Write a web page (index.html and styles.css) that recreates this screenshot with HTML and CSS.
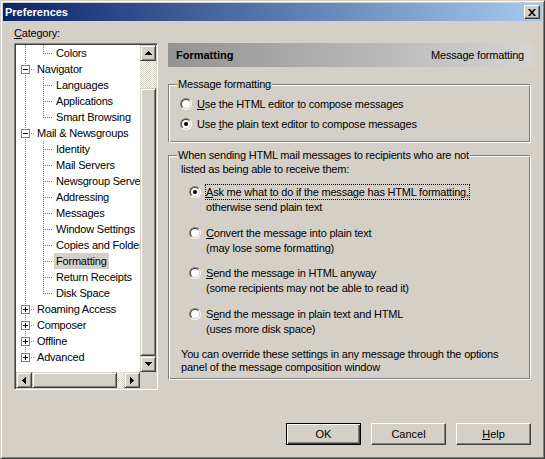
FILE: index.html
```
<!DOCTYPE html>
<html>
<head>
<meta charset="utf-8">
<link rel="stylesheet" href="styles.css">
</head>
<body>
<div class="window">
  <div class="titlebar">
    <span class="title">Preferences</span>
    <span class="close"><svg width="8" height="7" viewBox="0 0 8 7"><path d="M0 0h2l2 2.3L6 0h2L5 3.5 8 7H6L4 4.7 2 7H0l3-3.5z" fill="#000"/></svg></span>
  </div>
  <div class="main">
    <div class="cat-label"><u>C</u>ategory:</div>
    <div class="tree">
      <div class="rows">
        <div class="row"><span class="i v"></span><span class="i eh"></span><span class="lbl">Colors</span></div>
        <div class="row"><span class="i pv"><svg class="box" width="9" height="9"><rect x=".5" y=".5" width="8" height="8" fill="#fff" stroke="#808080"/><path d="M2 4.5h5" stroke="#000"/></svg></span><span class="lbl top">Navigator</span></div>
        <div class="row"><span class="i v"></span><span class="i vh"></span><span class="lbl">Languages</span></div>
        <div class="row"><span class="i v"></span><span class="i vh"></span><span class="lbl">Applications</span></div>
        <div class="row"><span class="i v"></span><span class="i eh"></span><span class="lbl">Smart Browsing</span></div>
        <div class="row"><span class="i pv"><svg class="box" width="9" height="9"><rect x=".5" y=".5" width="8" height="8" fill="#fff" stroke="#808080"/><path d="M2 4.5h5" stroke="#000"/></svg></span><span class="lbl top">Mail &amp; Newsgroups</span></div>
        <div class="row"><span class="i v"></span><span class="i vh"></span><span class="lbl">Identity</span></div>
        <div class="row"><span class="i v"></span><span class="i vh"></span><span class="lbl">Mail Servers</span></div>
        <div class="row"><span class="i v"></span><span class="i vh"></span><span class="lbl">Newsgroup Servers</span></div>
        <div class="row"><span class="i v"></span><span class="i vh"></span><span class="lbl">Addressing</span></div>
        <div class="row"><span class="i v"></span><span class="i vh"></span><span class="lbl">Messages</span></div>
        <div class="row"><span class="i v"></span><span class="i vh"></span><span class="lbl">Window Settings</span></div>
        <div class="row"><span class="i v"></span><span class="i vh"></span><span class="lbl">Copies and Folders</span></div>
        <div class="row"><span class="i v"></span><span class="i vh"></span><span class="lbl sel">Formatting</span></div>
        <div class="row"><span class="i v"></span><span class="i vh"></span><span class="lbl">Return Receipts</span></div>
        <div class="row"><span class="i v"></span><span class="i eh"></span><span class="lbl">Disk Space</span></div>
        <div class="row"><span class="i pv"><svg class="box" width="9" height="9"><rect x=".5" y=".5" width="8" height="8" fill="#fff" stroke="#808080"/><path d="M2 4.5h5M4.5 2v5" stroke="#000"/></svg></span><span class="lbl top">Roaming Access</span></div>
        <div class="row"><span class="i pv"><svg class="box" width="9" height="9"><rect x=".5" y=".5" width="8" height="8" fill="#fff" stroke="#808080"/><path d="M2 4.5h5M4.5 2v5" stroke="#000"/></svg></span><span class="lbl top">Composer</span></div>
        <div class="row"><span class="i pv"><svg class="box" width="9" height="9"><rect x=".5" y=".5" width="8" height="8" fill="#fff" stroke="#808080"/><path d="M2 4.5h5M4.5 2v5" stroke="#000"/></svg></span><span class="lbl top">Offline</span></div>
        <div class="row"><span class="i pe"><svg class="box" width="9" height="9"><rect x=".5" y=".5" width="8" height="8" fill="#fff" stroke="#808080"/><path d="M2 4.5h5M4.5 2v5" stroke="#000"/></svg></span><span class="lbl top">Advanced</span></div>
      </div>
      <div class="vscroll">
        <div class="b3d sbtn"><svg width="7" height="4" viewBox="0 0 7 4" shape-rendering="crispEdges"><path d="M3 0h1v1h1v1h1v1h1v1H0V3h1V2h1V1h1z" fill="#000"/></svg></div>
        <div class="track vtrack"></div>
        <div class="b3d vthumb"></div>
        <div class="b3d sbtn"><svg width="7" height="4" viewBox="0 0 7 4" shape-rendering="crispEdges"><path d="M0 0h7v1H6v1H5v1H4v1H3V3H2V2H1V1H0z" fill="#000"/></svg></div>
      </div>
      <div class="hscroll">
        <div class="b3d sbtn"><svg width="4" height="7" viewBox="0 0 4 7" shape-rendering="crispEdges"><path d="M3 0h1v7H3V6H2V5H1V4H0V3h1V2h1V1h1z" fill="#000"/></svg></div>
        <div class="b3d hthumb"></div>
        <div class="track htrack"></div>
        <div class="b3d sbtn"><svg width="4" height="7" viewBox="0 0 4 7" shape-rendering="crispEdges"><path d="M0 0h1v1h1v1h1v1h1v1H3v1H2v1H1v1H0z" fill="#000"/></svg></div>
      </div>
      <div class="corner"></div>
    </div>
    <div class="panel">
      <div class="phead"><b>Formatting</b><span>Message formatting</span></div>
      <fieldset class="group g1">
        <legend>Message formatting</legend>
        <div class="opt-row"><span class="radio"><span class="radio-in"></span></span><span><u>U</u>se the HTML editor to compose messages</span></div>
        <div class="opt-row"><span class="radio"><span class="radio-in on"></span></span><span>Use <u>t</u>he plain text editor to compose messages</span></div>
      </fieldset>
      <fieldset class="group g2">
        <legend>When sending HTML mail messages to recipients who are not</legend>
        <div class="intro">listed as being able to receive them:</div>
        <div class="options">
          <div class="option"><span class="radio"><span class="radio-in on"></span></span><div class="otext"><span class="l1 focus"><u>A</u>sk me what to do if the message has HTML formatting,</span><div class="l2">otherwise send plain text</div></div></div>
          <div class="option"><span class="radio"><span class="radio-in"></span></span><div class="otext"><span class="l1"><u>C</u>onvert the message into plain text</span><div class="l2">(may lose some formatting)</div></div></div>
          <div class="option"><span class="radio"><span class="radio-in"></span></span><div class="otext"><span class="l1"><u>S</u>end the message in HTML anyway</span><div class="l2">(some recipients may not be able to read it)</div></div></div>
          <div class="option"><span class="radio"><span class="radio-in"></span></span><div class="otext"><span class="l1">S<u>e</u>nd the message in plain text and HTML</span><div class="l2">(uses more disk space)</div></div></div>
        </div>
        <div class="note">You can override these settings in any message through the options<br>panel of the message composition window</div>
      </fieldset>
    </div>
  </div>
  <div class="footer">
    <button class="btn default">OK</button>
    <button class="btn">Cancel</button>
    <button class="btn"><u>H</u>elp</button>
  </div>
</div>
</body>
</html>
```
FILE: styles.css
```
html, body {
  margin: 0;
  padding: 0;
  background: #d4d0c8;
}

.window {
  --dv: repeating-linear-gradient(to bottom, #808080 0 1px, transparent 1px 2px);
  --dh: repeating-linear-gradient(to right, #808080 0 1px, transparent 1px 2px);
  width: 545px;
  height: 459px;
  box-sizing: border-box;
  background: #d4d0c8;
  border: 1px solid;
  border-color: #d4d0c8 #404040 #404040 #d4d0c8;
  box-shadow: inset 1px 1px #fff, inset -1px -1px #808080;
  padding: 2px;
  display: flex;
  flex-direction: column;
  font: 11px "Liberation Sans", Arial, sans-serif;
  letter-spacing: -0.2px;
  color: #000;
}

.titlebar {
  height: 18px;
  flex: none;
  display: flex;
  align-items: flex-start;
  justify-content: space-between;
  background: linear-gradient(to right, #0a246a, #a6caf0);
}

.title {
  color: #fff;
  font-weight: bold;
  line-height: 18px;
  padding-left: 2px;
  letter-spacing: 0;
}

.close {
  width: 16px;
  height: 14px;
  margin: 2px 2px 0 0;
  box-sizing: border-box;
  background: #d4d0c8;
  border: 1px solid;
  border-color: #fff #404040 #404040 #fff;
  box-shadow: inset -1px -1px #808080;
  display: flex;
  align-items: center;
  justify-content: center;
  padding-right: 1px;
}

.main {
  display: grid;
  grid-template-columns: 144px 364px;
  grid-template-rows: 17px 347px;
  column-gap: 10px;
  padding: 5px 0 0 11px;
}

.cat-label {
  grid-column: 1;
  grid-row: 1;
  line-height: 15px;
}

.tree {
  grid-column: 1;
  grid-row: 2;
  box-sizing: border-box;
  border: 1px solid;
  border-color: #808080 #fff #fff #808080;
  box-shadow: inset 1px 1px #404040, inset -1px -1px #d4d0c8;
  padding: 1px;
  background: #fff;
  display: grid;
  grid-template-columns: 124px 16px;
  grid-template-rows: 327px 16px;
}

.rows {
  overflow: hidden;
  background: #fff;
}

.row {
  display: flex;
  height: 16px;
  line-height: 16px;
  white-space: nowrap;
}

.i {
  width: 18px;
  height: 16px;
  flex: none;
  display: flex;
  align-items: flex-start;
  background-repeat: no-repeat;
}

.i.v {
  background-image: var(--dv);
  background-position: 9px 0;
  background-size: 1px 16px;
}

.i.vh {
  background-image: var(--dv), var(--dh);
  background-position: 9px 0, 11px 8px;
  background-size: 1px 16px, 7px 1px;
}

.i.eh {
  background-image: var(--dv), var(--dh);
  background-position: 9px 0, 11px 8px;
  background-size: 1px 9px, 7px 1px;
}

.i.pv {
  background-image: var(--dv), var(--dh);
  background-position: 9px 0, 15px 8px;
  background-size: 1px 16px, 3px 1px;
}

.i.pe {
  background-image: var(--dv), var(--dh);
  background-position: 9px 0, 15px 8px;
  background-size: 1px 8px, 3px 1px;
}

.box {
  display: block;
  margin: 4px 0 0 5px;
}

.lbl {
  padding: 0 2px;
  margin-left: 2px;
}

.lbl.top {
  margin-left: 1px;
}

.lbl.sel {
  background: #d4d0c8;
}

.b3d {
  box-sizing: border-box;
  background: #d4d0c8;
  border: 1px solid;
  border-color: #d4d0c8 #404040 #404040 #d4d0c8;
  box-shadow: inset 1px 1px #fff, inset -1px -1px #808080;
  display: flex;
  align-items: center;
  justify-content: center;
}

.sbtn {
  width: 16px;
  height: 16px;
  flex: none;
}

.track {
  background: repeating-conic-gradient(#d4d0c8 0 25%, #fff 0 50%) 0 0 / 2px 2px;
  flex: none;
}

.vscroll {
  display: flex;
  flex-direction: column;
}

.vtrack { height: 27px; }
.vthumb { height: 268px; flex: none; }

.hscroll {
  display: flex;
}

.htrack { width: 7px; }
.hthumb { width: 85px; flex: none; }

.corner {
  background: #d4d0c8;
}

.panel {
  grid-column: 2;
  grid-row: 2;
  display: flex;
  flex-direction: column;
}

.phead {
  height: 24px;
  flex: none;
  display: flex;
  align-items: center;
  justify-content: space-between;
  padding: 0 8px;
  background: linear-gradient(to right, #939393, #d4d4d4);
}

.phead b {
  letter-spacing: 0;
}

.group {
  margin: 0 1px 0 0;
  min-width: 0;
  border: 1px solid;
  border-color: #808080 #fff #fff #808080;
  box-shadow: inset 1px 1px #fff, inset -1px -1px #808080;
}

.group legend {
  padding: 0 1px;
  line-height: 13px;
  background: #d4d0c8;
}

.g1 {
  margin-top: 11px;
  padding: 3px 0 8px 8px;
}

.g2 {
  margin-top: 6px;
  padding: 1px 0 5px 8px;
}

.opt-row {
  display: flex;
  align-items: center;
  gap: 5px;
  height: 20px;
  padding-left: 3px;
}

.radio {
  width: 12px;
  height: 12px;
  flex: none;
  box-sizing: border-box;
  border-radius: 50%;
  border: 1px solid;
  border-color: #808080 #fff #fff #808080;
  display: flex;
}

.radio-in {
  flex: 1;
  box-sizing: border-box;
  border-radius: 50%;
  border: 1px solid;
  border-color: #404040 #d4d0c8 #d4d0c8 #404040;
  background: #fff;
  display: flex;
  align-items: center;
  justify-content: center;
}

.radio-in.on::before {
  content: "";
  width: 4px;
  height: 4px;
  border-radius: 50%;
  background: #000;
}

.intro {
  padding-left: 4px;
  line-height: 13px;
}

.options {
  margin-top: 8px;
  padding-left: 12px;
}

.option {
  display: flex;
  align-items: flex-start;
  gap: 4px;
}

.option + .option {
  margin-top: 10.67px;
}

.option .radio {
  margin-top: 2px;
}

.l1 {
  display: inline-block;
  line-height: 14px;
  border: 1px solid transparent;
}

.l1.focus {
  border: 1px dotted #000;
}

.l2 {
  line-height: 14px;
  padding-left: 1px;
}

.note {
  margin-top: 12px;
  padding-left: 4px;
  line-height: 13px;
}

.footer {
  display: flex;
  justify-content: flex-end;
  gap: 10px;
  padding: 33px 11px 0 0;
}

.btn {
  width: 75px;
  height: 22px;
  padding: 0;
  margin: 0;
  font: 11px "Liberation Sans", Arial, sans-serif;
  color: #000;
  background: #d4d0c8;
  box-sizing: border-box;
  border: 1px solid;
  border-color: #fff #404040 #404040 #fff;
  box-shadow: inset -1px -1px #808080;
}

.btn.default {
  border-color: #000;
  box-shadow: inset 1px 1px #fff, inset -1px -1px #404040, inset -2px -2px #808080;
}
```
